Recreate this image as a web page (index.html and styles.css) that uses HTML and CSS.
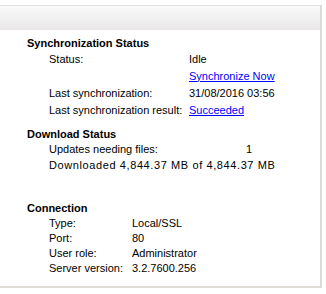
FILE: index.html
```html
<!DOCTYPE html>
<html>
    <head>
        <meta charset="utf-8" />
        <title>Update Services</title>
        <link rel="stylesheet" href="styles.css">
    </head>
    <body>
        <div class="panel">
            <div class="panel-header"></div>

            <div class="panel-body">
                <div class="section">
                    <h2>Synchronization Status</h2>
                    <div class="rows rows-sync">
                        <span>Status:</span><span>Idle</span>
                        <span></span><a href="#">Synchronize Now</a>
                        <span>Last synchronization:</span><span>31/08/2016 03:56</span>
                        <span>Last synchronization result:</span><a href="#">Succeeded</a>
                    </div>
                </div>

                <div class="section">
                    <h2>Download Status</h2>
                    <div class="rows rows-download">
                        <span>Updates needing files:</span><span class="num">1</span>
                    </div>
                    <div class="line">Downloaded 4,844.37 MB of 4,844.37 MB</div>
                </div>

                <div class="section section-conn">
                    <h2>Connection</h2>
                    <div class="rows rows-conn">
                        <span>Type:</span><span>Local/SSL</span>
                        <span>Port:</span><span>80</span>
                        <span>User role:</span><span>Administrator</span>
                        <span>Server version:</span><span>3.2.7600.256</span>
                    </div>
                </div>
            </div>
        </div>
    </body>
</html>
```
FILE: styles.css
```css
* {
    box-sizing: border-box;
    margin: 0;
    padding: 0;
}

body {
    font-family: "Liberation Sans", Arial, sans-serif;
    font-size: 11px;
    background-color: #fff;
    color: #000;
    padding-top: 5px;
}

.panel {
    width: 322px;
    height: 283px;
    border-right: 2px solid #dedbd6;
    border-bottom: 2px solid #dedbd6;
}

.panel-header {
    height: 25px;
    border-top: 1px solid #e4e2e0;
    background: linear-gradient(#f9f9f9, #e9e7e7);
}

.panel-body {
    padding: 6px 0 0 27px;
}

h2 {
    font-size: 11px;
    font-weight: bold;
    line-height: 14px;
}

.section {
    margin-bottom: 9px;
}

.section-conn {
    margin-top: 28px;
}

.rows {
    display: grid;
    padding-left: 22px;
}

.rows-sync {
    grid-template-columns: 140px auto;
    grid-auto-rows: 17px;
    align-items: center;
}

.rows-download {
    grid-template-columns: 197px auto;
    grid-auto-rows: 16px;
    align-items: center;
}

.num {
    justify-self: start;
}

.line {
    padding-left: 22px;
    line-height: 16px;
    letter-spacing: 0.6px;
}

.rows-conn {
    grid-template-columns: 83px auto;
    grid-auto-rows: 15px;
    align-items: center;
}

a {
    color: #0000ff;
    text-decoration: underline;
}
```
